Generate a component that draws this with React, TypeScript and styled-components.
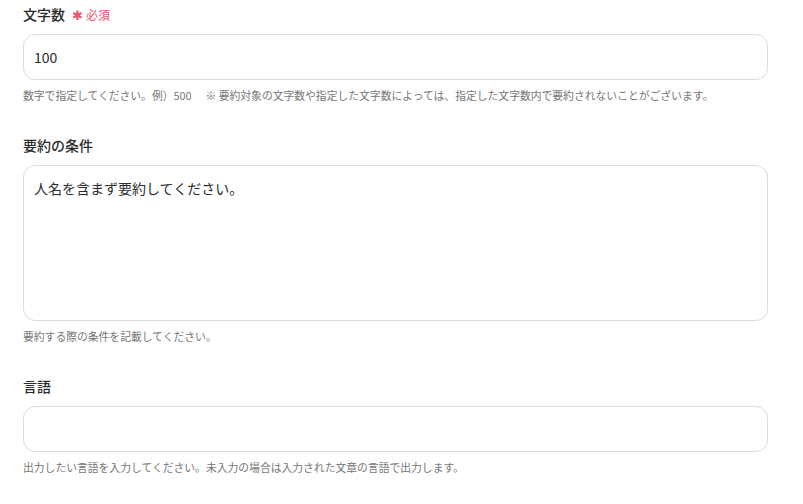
import React from 'react';
import styled, { createGlobalStyle } from 'styled-components';

const GlobalStyle = createGlobalStyle`
  html, body {
    margin: 0;
    padding: 0;
    background: #ffffff;
  }

  body {
    font-family: "Noto Sans CJK JP", "Noto Sans", sans-serif;
    color: #333333;
  }
`;

const Form = styled.div`
  width: 745px;
  padding: 4px 0 0 23px;
  display: flex;
  flex-direction: column;
  gap: 32px;
`;

const Field = styled.div`
  display: flex;
  flex-direction: column;
`;

const Label = styled.div`
  display: flex;
  align-items: center;
  gap: 7px;
  height: 20px;
  margin-bottom: 10px;
  font-size: 14px;
  font-weight: 500;
  color: #2b2b2b;
`;

const Required = styled.span`
  display: flex;
  align-items: center;
  gap: 3px;
  font-size: 12px;
  font-weight: 400;
  color: #f0506e;

  & b {
    font-size: 13px;
    font-weight: 400;
  }
`;

const Input = styled.div<{ $tall?: boolean }>`
  box-sizing: border-box;
  height: ${(p) => (p.$tall ? '156px' : '46px')};
  padding: ${(p) => (p.$tall ? '12px 10px' : '0 10px')};
  display: flex;
  align-items: ${(p) => (p.$tall ? 'flex-start' : 'center')};
  border: 1px solid #dcdcdf;
  border-radius: 12px;
  font-size: 14px;
  line-height: 20px;
  color: #2b2b2b;
`;

const Hint = styled.div`
  margin-top: 7px;
  font-size: 10.8px;
  line-height: 16px;
  color: #767676;
  white-space: nowrap;

  & span {
    margin-left: 14px;
  }
`;

const App = (): JSX.Element => (
  <>
    <GlobalStyle />
    <Form>
      <Field>
        <Label>
          文字数
          <Required><b>✱</b>必須</Required>
        </Label>
        <Input>100</Input>
        <Hint>
          数字で指定してください。例）500
          <span>※ 要約対象の文字数や指定した文字数によっては、指定した文字数内で要約されないことがございます。</span>
        </Hint>
      </Field>
      <Field>
        <Label>要約の条件</Label>
        <Input $tall>人名を含まず要約してください。</Input>
        <Hint>要約する際の条件を記載してください。</Hint>
      </Field>
      <Field>
        <Label>言語</Label>
        <Input />
        <Hint>出力したい言語を入力してください。未入力の場合は入力された文章の言語で出力します。</Hint>
      </Field>
    </Form>
  </>
);

export default App;
